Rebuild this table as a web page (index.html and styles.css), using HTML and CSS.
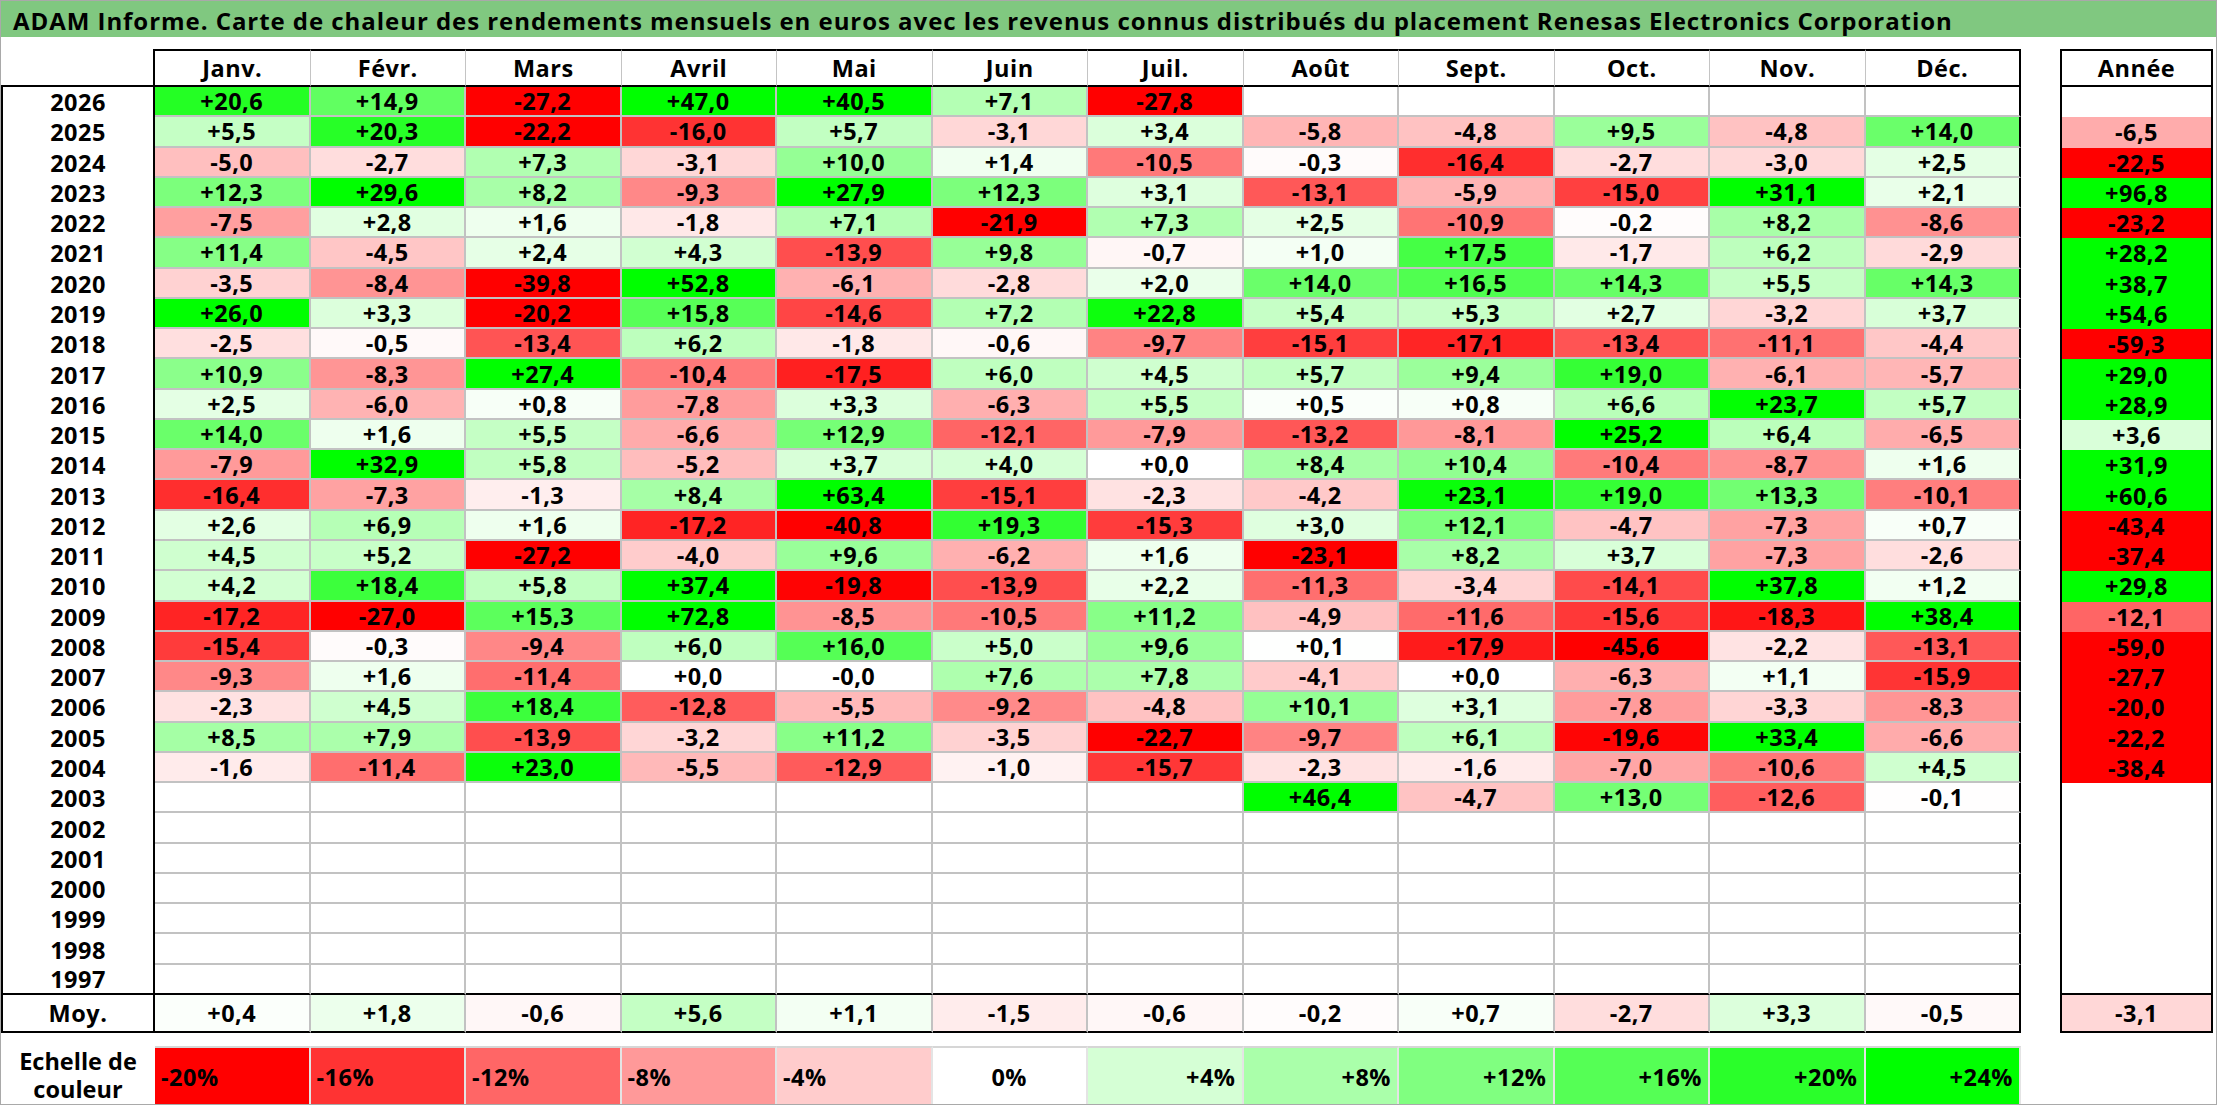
FILE: index.html
```html
<!DOCTYPE html>
<html lang="fr">
<head>
<meta charset="utf-8">
<title>ADAM Informe</title>
<link rel="stylesheet" href="styles.css">
</head>
<body>
<div class="sheet">
  <div class="title">ADAM Informe. Carte de chaleur des rendements mensuels en euros avec les revenus connus distribués du placement Renesas Electronics Corporation</div>
  <div class="grid" id="grid"></div>
  <div class="legend" id="legend">
    <div class="lab">Echelle de<br>couleur</div>
  </div>
</div>
<script src="script.js"></script>
</body>
</html>
```
FILE: styles.css
```css
html, body { margin: 0; padding: 0; background: #fff; }
.sheet {
  width: 2217px;
  height: 1105px;
  box-sizing: border-box;
  border: 1px solid #a9a9a9;
  font-family: "Open Sans", "DejaVu Sans", sans-serif;
  font-weight: 700;
  color: #000;
  overflow: hidden;
}
.title {
  height: 36px;
  box-sizing: border-box;
  background: #80c880;
  display: flex;
  align-items: center;
  padding: 3px 0 0 12px;
  font-size: 24px;
  letter-spacing: 0.95px;
  white-space: nowrap;
  margin-bottom: 12px;
}
.grid {
  display: grid;
  grid-template-columns: 154px repeat(12, 155.5px) 39px 153px;
  grid-template-rows: 38px repeat(30, 30.27px) 38px;
}
.cell {
  box-sizing: border-box;
  display: flex;
  align-items: center;
  justify-content: center;
  font-size: 23.5px;
  white-space: nowrap;
  min-width: 0;
  letter-spacing: 0.5px;
}
.corner { border-right: 2px solid #000; border-bottom: 2px solid #000; }
.mh { border-top: 2px solid #000; border-bottom: 2px solid #000; border-right: 1px solid #c4c4c4; }
.mh.last { border-right: 2px solid #000; }
.yr { border-left: 2px solid #000; border-right: 2px solid #000; }
.d { border-right: 2px solid #c2c2c2; border-bottom: 2px solid #c2c2c2; }
.d.last { border-right: 2px solid #000; }
.endrow { border-bottom: 2px solid #000; }
.moy { border-bottom: 2px solid #000; }
.an { border-left: 2px solid #000; border-right: 2px solid #000; }
.an.head { border-top: 2px solid #000; border-bottom: 2px solid #000; }
.legend {
  display: grid;
  grid-template-columns: 154px repeat(12, 155.5px);
  height: 71px;
}
.lab {
  align-self: end;
  height: 58px;
  display: flex;
  align-items: center;
  justify-content: center;
  text-align: center;
  font-size: 23.5px;
  line-height: 28px;
}
.lg {
  align-self: end;
  height: 58px;
  box-sizing: border-box;
  border-top: 2px solid #d6d6d6;
  border-right: 2px solid #e4e4e4;
  display: flex;
  align-items: center;
  padding: 2px 6px 0 6px;
  font-size: 23.5px;
  letter-spacing: 0.5px;
}
.lg.neg { justify-content: flex-start; }
.lg.zero { justify-content: center; }
.lg.pos { justify-content: flex-end; }
```
FILE: script.js
```javascript
(function () {
  var months = ['Janv.', 'Févr.', 'Mars', 'Avril', 'Mai', 'Juin', 'Juil.', 'Août', 'Sept.', 'Oct.', 'Nov.', 'Déc.'];
  var rows = [
    ['2026', '+20,6 +14,9 -27,2 +47,0 +40,5 +7,1 -27,8 _ _ _ _ _ _'],
    ['2025', '+5,5 +20,3 -22,2 -16,0 +5,7 -3,1 +3,4 -5,8 -4,8 +9,5 -4,8 +14,0 -6,5'],
    ['2024', '-5,0 -2,7 +7,3 -3,1 +10,0 +1,4 -10,5 -0,3 -16,4 -2,7 -3,0 +2,5 -22,5'],
    ['2023', '+12,3 +29,6 +8,2 -9,3 +27,9 +12,3 +3,1 -13,1 -5,9 -15,0 +31,1 +2,1 +96,8'],
    ['2022', '-7,5 +2,8 +1,6 -1,8 +7,1 -21,9 +7,3 +2,5 -10,9 -0,2 +8,2 -8,6 -23,2'],
    ['2021', '+11,4 -4,5 +2,4 +4,3 -13,9 +9,8 -0,7 +1,0 +17,5 -1,7 +6,2 -2,9 +28,2'],
    ['2020', '-3,5 -8,4 -39,8 +52,8 -6,1 -2,8 +2,0 +14,0 +16,5 +14,3 +5,5 +14,3 +38,7'],
    ['2019', '+26,0 +3,3 -20,2 +15,8 -14,6 +7,2 +22,8 +5,4 +5,3 +2,7 -3,2 +3,7 +54,6'],
    ['2018', '-2,5 -0,5 -13,4 +6,2 -1,8 -0,6 -9,7 -15,1 -17,1 -13,4 -11,1 -4,4 -59,3'],
    ['2017', '+10,9 -8,3 +27,4 -10,4 -17,5 +6,0 +4,5 +5,7 +9,4 +19,0 -6,1 -5,7 +29,0'],
    ['2016', '+2,5 -6,0 +0,8 -7,8 +3,3 -6,3 +5,5 +0,5 +0,8 +6,6 +23,7 +5,7 +28,9'],
    ['2015', '+14,0 +1,6 +5,5 -6,6 +12,9 -12,1 -7,9 -13,2 -8,1 +25,2 +6,4 -6,5 +3,6'],
    ['2014', '-7,9 +32,9 +5,8 -5,2 +3,7 +4,0 +0,0 +8,4 +10,4 -10,4 -8,7 +1,6 +31,9'],
    ['2013', '-16,4 -7,3 -1,3 +8,4 +63,4 -15,1 -2,3 -4,2 +23,1 +19,0 +13,3 -10,1 +60,6'],
    ['2012', '+2,6 +6,9 +1,6 -17,2 -40,8 +19,3 -15,3 +3,0 +12,1 -4,7 -7,3 +0,7 -43,4'],
    ['2011', '+4,5 +5,2 -27,2 -4,0 +9,6 -6,2 +1,6 -23,1 +8,2 +3,7 -7,3 -2,6 -37,4'],
    ['2010', '+4,2 +18,4 +5,8 +37,4 -19,8 -13,9 +2,2 -11,3 -3,4 -14,1 +37,8 +1,2 +29,8'],
    ['2009', '-17,2 -27,0 +15,3 +72,8 -8,5 -10,5 +11,2 -4,9 -11,6 -15,6 -18,3 +38,4 -12,1'],
    ['2008', '-15,4 -0,3 -9,4 +6,0 +16,0 +5,0 +9,6 +0,1 -17,9 -45,6 -2,2 -13,1 -59,0'],
    ['2007', '-9,3 +1,6 -11,4 +0,0 -0,0 +7,6 +7,8 -4,1 +0,0 -6,3 +1,1 -15,9 -27,7'],
    ['2006', '-2,3 +4,5 +18,4 -12,8 -5,5 -9,2 -4,8 +10,1 +3,1 -7,8 -3,3 -8,3 -20,0'],
    ['2005', '+8,5 +7,9 -13,9 -3,2 +11,2 -3,5 -22,7 -9,7 +6,1 -19,6 +33,4 -6,6 -22,2'],
    ['2004', '-1,6 -11,4 +23,0 -5,5 -12,9 -1,0 -15,7 -2,3 -1,6 -7,0 -10,6 +4,5 -38,4'],
    ['2003', '_ _ _ _ _ _ _ +46,4 -4,7 +13,0 -12,6 -0,1 _'],
    ['2002', '_ _ _ _ _ _ _ _ _ _ _ _ _'],
    ['2001', '_ _ _ _ _ _ _ _ _ _ _ _ _'],
    ['2000', '_ _ _ _ _ _ _ _ _ _ _ _ _'],
    ['1999', '_ _ _ _ _ _ _ _ _ _ _ _ _'],
    ['1998', '_ _ _ _ _ _ _ _ _ _ _ _ _'],
    ['1997', '_ _ _ _ _ _ _ _ _ _ _ _ _'],
    ['Moy.', '+0,4 +1,8 -0,6 +5,6 +1,1 -1,5 -0,6 -0,2 +0,7 -2,7 +3,3 -0,5 -3,1']
  ];

  function colour(v) {
    var t, c;
    if (v >= 0) {
      t = Math.min(v / 24, 1);
      c = Math.round(255 * (1 - t));
      return 'rgb(' + c + ',255,' + c + ')';
    }
    t = Math.min(-v / 20, 1);
    c = Math.round(255 * (1 - t));
    return 'rgb(255,' + c + ',' + c + ')';
  }

  function el(cls, text, bg) {
    var d = document.createElement('div');
    d.className = 'cell ' + cls;
    if (text) d.textContent = text;
    if (bg) d.style.background = bg;
    return d;
  }

  var grid = document.getElementById('grid');
  grid.appendChild(el('corner'));
  months.forEach(function (m, i) {
    grid.appendChild(el('mh' + (i === 11 ? ' last' : ''), m));
  });
  grid.appendChild(el('gap'));
  grid.appendChild(el('an head', 'Année'));

  rows.forEach(function (r) {
    var isMoy = r[0] === 'Moy.';
    var isEnd = r[0] === '1997';
    var extra = isMoy ? ' moy' : (isEnd ? ' endrow' : '');
    var vals = r[1].split(' ');
    grid.appendChild(el('yr' + extra, r[0]));
    for (var i = 0; i < 12; i++) {
      var s = vals[i];
      var has = s !== '_';
      var bg = has ? colour(parseFloat(s.replace(',', '.'))) : null;
      grid.appendChild(el('d' + (i === 11 ? ' last' : '') + extra, has ? s : '', bg));
    }
    grid.appendChild(el('gap'));
    var a = vals[12];
    var ah = a !== '_';
    grid.appendChild(el('an' + extra, ah ? a : '', ah ? colour(parseFloat(a.replace(',', '.'))) : null));
  });

  var legend = document.getElementById('legend');
  var steps = [-20, -16, -12, -8, -4, 0, 4, 8, 12, 16, 20, 24];
  steps.forEach(function (v) {
    var cls = v < 0 ? 'neg' : (v === 0 ? 'zero' : 'pos');
    var label = (v > 0 ? '+' : '') + v + '%';
    var d = document.createElement('div');
    d.className = 'lg ' + cls;
    d.textContent = label;
    d.style.background = colour(v);
    legend.appendChild(d);
  });
})();
```
